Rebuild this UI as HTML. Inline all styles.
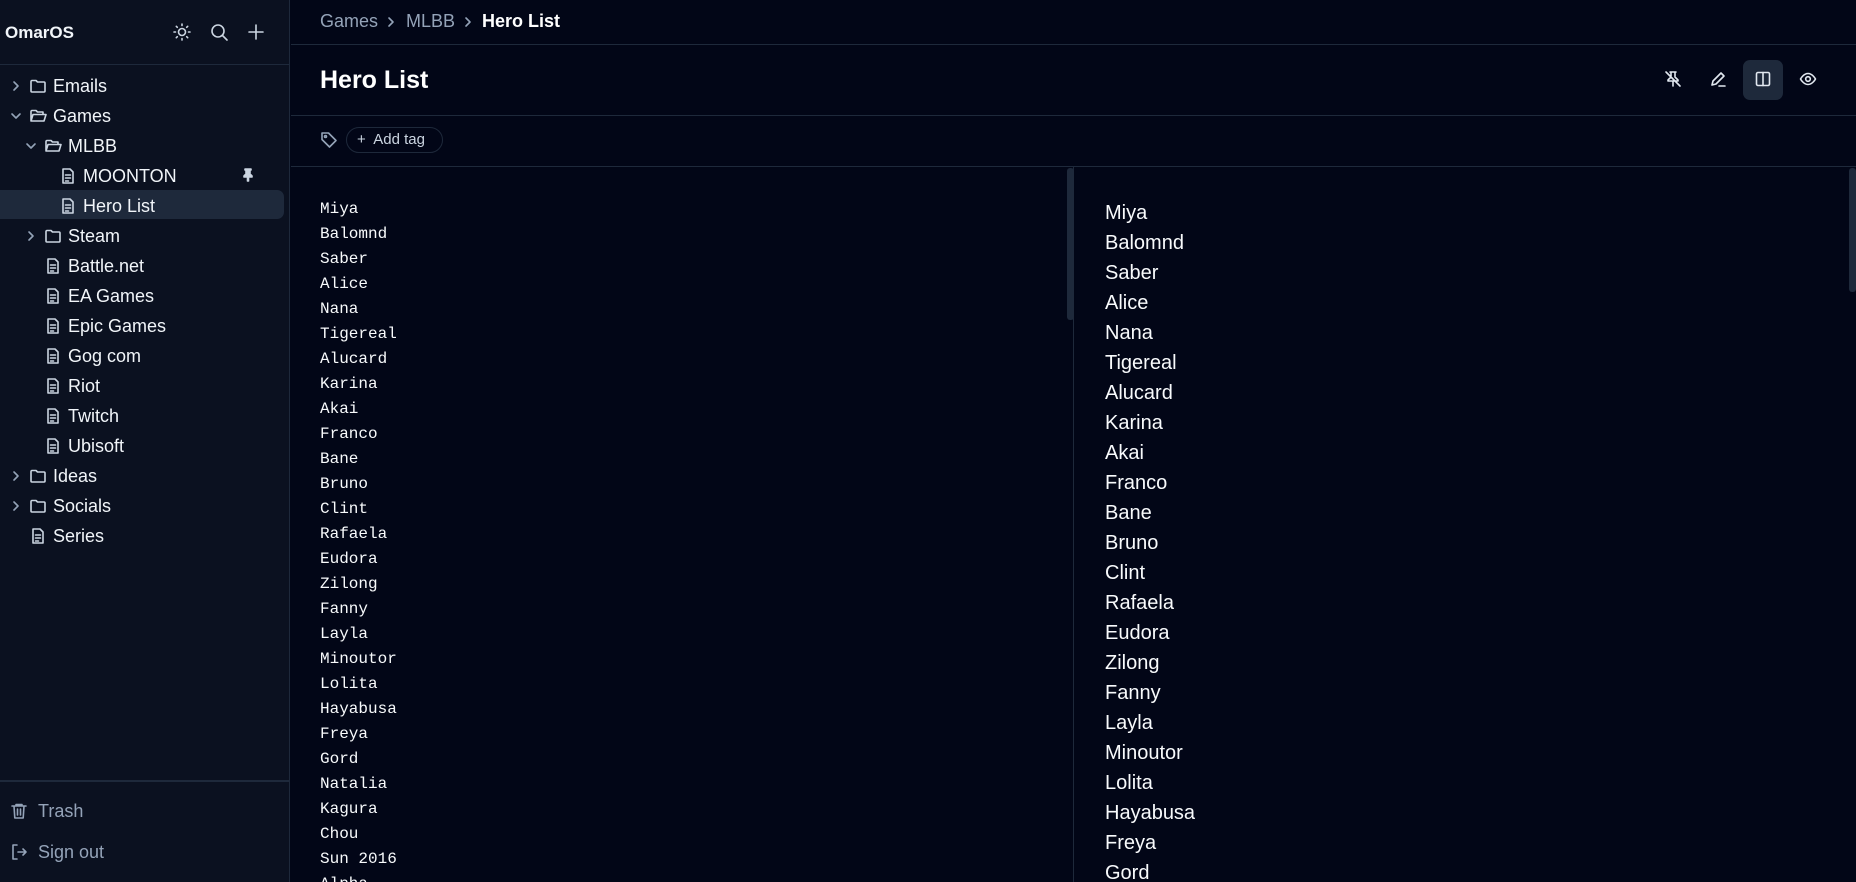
<!DOCTYPE html><html><head><meta charset="utf-8"><style>
*{box-sizing:border-box;margin:0;padding:0}
html,body{width:1856px;height:882px;overflow:hidden;background:#020617}
body{font-family:"Liberation Sans",sans-serif;color:#f1f5f9}
#w{position:relative;width:1856px;height:882px;overflow:hidden}
.sb{position:absolute;left:0;top:0;width:290px;height:882px;background:#0b1120;border-right:1px solid #1e293b}
.abs{position:absolute}
.it{position:absolute;height:30px;line-height:30px;font-size:18px;color:#f1f5f9;white-space:nowrap}
svg{position:absolute;fill:none;stroke:currentColor;stroke-width:1.6;stroke-linecap:round;stroke-linejoin:round}
.mono{position:absolute;left:320px;top:197px;font-family:"Liberation Mono",monospace;font-size:16px;line-height:25px;color:#f8fafc}
.prev{position:absolute;left:1105px;top:198px;font-size:20px;line-height:30px;color:#f8fafc}
.bc{position:absolute;top:11px;font-size:18px;color:#94a3b8;white-space:nowrap}
</style></head><body><div id="w">
<div class="sb">
<div class="abs" style="left:5px;top:23px;font-size:17px;font-weight:bold">OmarOS</div>
<svg style="left:172px;top:22px;color:#cbd5e1" width="20" height="20" viewBox="0 0 20 20"><circle cx="10" cy="10" r="3.5"/><path d="M10 2v1.5M10 16.5V18M2 10h1.5M16.5 10H18M4.3 4.3l1 1M14.7 14.7l1 1M4.3 15.7l1-1M14.7 5.3l1-1"/></svg>
<svg style="left:209px;top:22px;color:#cbd5e1" width="20" height="20" viewBox="0 0 20 20"><circle cx="9" cy="9" r="6"/><path d="M13.5 13.5L18 18"/></svg>
<svg style="left:246px;top:22px;color:#cbd5e1" width="20" height="20" viewBox="0 0 20 20"><path d="M10 3v14M3 10h14"/></svg>
<div class="abs" style="left:0;top:64px;width:290px;border-top:1px solid #1e293b"></div>
<div class="abs" style="left:0;top:190px;width:284px;height:29px;background:#1e293b;border-radius:0 7px 7px 0"></div>
<div id="tree"></div>
<div class="abs" style="left:0;top:780px;width:290px;border-top:2px solid #1e293b"></div>
<svg style="left:10px;top:802px;color:#94a3b8" width="18" height="18" viewBox="0 0 18 18"><path d="M2 4h14M6 4V2.5h6V4M4 4l.8 12h8.4L14 4M7.5 7v6M10.5 7v6"/></svg>
<div class="it" style="left:38px;top:796px;color:#94a3b8">Trash</div>
<svg style="left:10px;top:843px;color:#94a3b8" width="18" height="18" viewBox="0 0 18 18"><path d="M7 2H3v14h4M8 9h8M13 6l3 3-3 3"/></svg>
<div class="it" style="left:38px;top:837px;color:#94a3b8">Sign out</div>
</div>
<div class="bc" style="left:320px">Games</div>
<div class="bc" style="left:406px">MLBB</div>
<div class="bc" style="left:482px;color:#fff;font-weight:bold">Hero List</div>
<svg style="left:385px;top:16px;color:#94a3b8" width="12" height="12" viewBox="0 0 12 12"><path d="M4 2l4 4-4 4"/></svg>
<svg style="left:462px;top:16px;color:#94a3b8" width="12" height="12" viewBox="0 0 12 12"><path d="M4 2l4 4-4 4"/></svg>
<div class="abs" style="left:291px;top:44px;width:1565px;border-top:1px solid #1e293b"></div>
<div class="abs" style="left:320px;top:66px;font-size:25px;font-weight:bold;color:#fff">Hero List</div>
<svg style="left:1664px;top:70px;color:#e2e8f0" width="18" height="18" viewBox="0 0 18 18"><path d="M6 2h6M7 2v5l-3 3v1h10v-1l-3-3V2M9 11v5M2 2l14 14"/></svg>
<svg style="left:1709px;top:70px;color:#e2e8f0" width="18" height="18" viewBox="0 0 18 18"><path d="M3 15l1-4 8-8 3 3-8 8zM10 16h6"/></svg>
<div class="abs" style="left:1743px;top:60px;width:40px;height:40px;background:#1e293b;border-radius:7px"></div>
<svg style="left:1754px;top:70px;color:#e2e8f0" width="18" height="18" viewBox="0 0 18 18"><rect x="2.5" y="2.5" width="13" height="13" rx="1.5"/><path d="M9 2.5v13"/></svg>
<svg style="left:1799px;top:70px;color:#e2e8f0" width="18" height="18" viewBox="0 0 18 18"><path d="M1.5 9s3-5.5 7.5-5.5S16.5 9 16.5 9s-3 5.5-7.5 5.5S1.5 9 1.5 9z"/><circle cx="9" cy="9" r="2.3"/></svg>
<div class="abs" style="left:291px;top:115px;width:1565px;border-top:1px solid #1e293b"></div>
<svg style="left:320px;top:131px;color:#94a3b8" width="18" height="18" viewBox="0 0 18 18"><path d="M2 2h6.5l7.5 7.5-6.5 6.5L2 8.5z"/><circle cx="5.5" cy="5.5" r="1"/></svg>
<div class="abs" style="left:346px;top:127px;width:97px;height:26px;border:1px solid #1e293b;border-radius:13px;font-size:15px;line-height:24px;color:#cbd5e1;padding-left:10px;white-space:nowrap">+&nbsp; Add tag</div>
<div class="abs" style="left:291px;top:166px;width:1565px;border-top:1px solid #1e293b"></div>
<div class="abs" style="left:1073px;top:167px;width:1px;height:715px;background:#1e293b"></div>
<div class="abs" style="left:1067px;top:168px;width:7px;height:152px;background:#1e293b;border-radius:3px"></div>
<div class="abs" style="left:1849px;top:168px;width:7px;height:124px;background:#1e293b;border-radius:3px"></div>
<div class="mono" id="m"></div>
<div class="prev" id="p"></div>
</div>
<script>
var n="Miya Balomnd Saber Alice Nana Tigereal Alucard Karina Akai Franco Bane Bruno Clint Rafaela Eudora Zilong Fanny Layla Minoutor Lolita Hayabusa Freya Gord Natalia Kagura Chou Sun_2016 Alpha".split(" ").map(function(s){return s.replace("_"," ")});
document.getElementById("m").innerHTML=n.join("<br>");
document.getElementById("p").innerHTML=n.join("<br>");
var ch='<path d="M4 2l4 4-4 4"/>',chd='<path d="M2 4l4 4 4-4"/>';
var fo='<path d="M2 4.5a1 1 0 0 1 1-1h4l1.5 1.5H15a1 1 0 0 1 1 1V14a1 1 0 0 1-1 1H3a1 1 0 0 1-1-1z"/>';
var foo='<path d="M2 14V4.5a1 1 0 0 1 1-1h4l1.5 1.5H14v2.5M2 14l2-6.5h13L15 14z"/>';
var fi='<path d="M4 2h7l3 3v11H4zM6.5 8h5M6.5 11h5M6.5 14h3"/>';
var T=[[0,'c',fo,'Emails'],[0,'d',foo,'Games'],[1,'d',foo,'MLBB'],[2,'',fi,'MOONTON'],[2,'',fi,'Hero List'],[1,'c',fo,'Steam'],[1,'',fi,'Battle.net'],[1,'',fi,'EA Games'],[1,'',fi,'Epic Games'],[1,'',fi,'Gog com'],[1,'',fi,'Riot'],[1,'',fi,'Twitch'],[1,'',fi,'Ubisoft'],[0,'c',fo,'Ideas'],[0,'c',fo,'Socials'],[0,'',fi,'Series']];
var h='';T.forEach(function(t,i){var y=71+i*30,o=t[0]*15;
if(t[1])h+='<svg style="left:'+(10+o)+'px;top:'+(y+9)+'px;color:#94a3b8" width="12" height="12" viewBox="0 0 12 12">'+(t[1]=='c'?ch:chd)+'</svg>';
h+='<svg style="left:'+(29+o)+'px;top:'+(y+6)+'px;color:#cbd5e1" width="18" height="18" viewBox="0 0 18 18">'+t[2]+'</svg>';
h+='<div class="it" style="left:'+(53+o)+'px;top:'+y+'px">'+t[3]+'</div>';});
h+='<svg style="left:242px;top:168px;color:#cbd5e1;fill:#cbd5e1" width="12" height="14" viewBox="0 0 12 14"><path d="M3 1h6v1H8v4l2 2v1H2V8l2-2V2H3zM5.5 9h1v4h-1z"/></svg>';
document.getElementById("tree").innerHTML=h;
</script>
</body></html>
